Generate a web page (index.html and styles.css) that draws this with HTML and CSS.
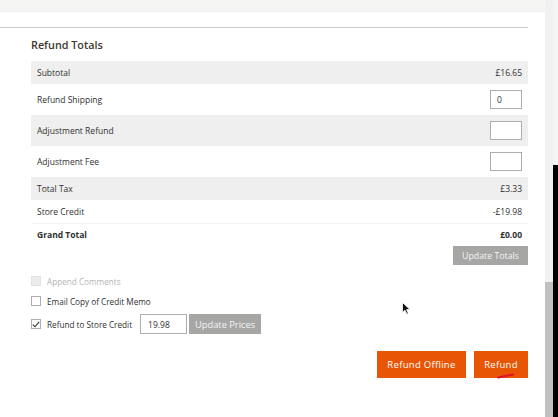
FILE: index.html
```html
<!DOCTYPE html>
<html lang="en">
<head>
    <meta charset="UTF-8">
    <title>Credit Memo - Refund Totals</title>
    <link rel="stylesheet" href="styles.css">
</head>
<body>

    <div class="viewport">
        <div class="content">
            <div class="top-band"></div>
            <div class="divider"></div>

            <!-- Totals block -->
            <section class="totals">
                <h2>Refund Totals</h2>
                <table class="totals-table">
                    <tbody>
                        <tr class="shaded short"><td>Subtotal</td><td class="amount">£16.65</td></tr>
                        <tr class="tall"><td>Refund Shipping</td><td class="amount"><input class="field" type="text" value="0"></td></tr>
                        <tr class="shaded tall"><td>Adjustment Refund</td><td class="amount"><input class="field" type="text"></td></tr>
                        <tr class="tall"><td>Adjustment Fee</td><td class="amount"><input class="field" type="text"></td></tr>
                        <tr class="shaded short"><td>Total Tax</td><td class="amount">£3.33</td></tr>
                        <tr class="short ruled"><td>Store Credit</td><td class="amount">-£19.98</td></tr>
                        <tr class="short grand"><td>Grand Total</td><td class="amount">£0.00</td></tr>
                    </tbody>
                </table>
                <div class="update-row">
                    <button class="btn-grey">Update Totals</button>
                </div>

                <!-- Options -->
                <div class="options">
                    <label class="option disabled"><span class="check"></span>Append Comments</label>
                    <label class="option"><span class="check"></span>Email Copy of Credit Memo</label>
                    <div class="option store-credit">
                        <span class="check checked">
                            <svg width="8" height="7" viewBox="0 0 8 7"><path d="M0.8 3.6 L3 5.8 L7.2 0.8" fill="none" stroke="#333" stroke-width="1.1"/></svg>
                        </span>
                        Refund to Store Credit
                        <span class="credit-group">
                            <input class="credit-field" type="text" value="19.98">
                            <button class="btn-grey btn-prices">Update Prices</button>
                        </span>
                    </div>
                </div>

                <div class="actions">
                    <button class="btn-primary btn-offline">Refund Offline</button>
                    <button class="btn-primary btn-refund">Refund<span class="scribble"></span></button>
                </div>
            </section>

            <!-- mouse pointer -->
            <svg class="cursor" width="9" height="13" viewBox="0 0 9 13">
                <path d="M0.5 0.5 L0.5 10.5 L3 8.2 L4.8 12.2 L6.3 11.5 L4.6 7.6 L8 7.6 Z" fill="#111" stroke="#fff" stroke-width="0.8"/>
            </svg>
        </div>

        <div class="scrollbar">
            <div class="track"></div>
            <div class="thumb"></div>
        </div>
        <div class="edge">
            <div class="edge-top"></div>
        </div>
    </div>

</body>
</html>
```

FILE: styles.css
```css
/* Page frame */
body {
    margin: 0;
    font-family: "Open Sans", "Liberation Sans", sans-serif;
    color: #303030;
    background-color: #fff;
}

.viewport {
    display: flex;
    height: 417px;
    overflow: hidden;
}

.content {
    position: relative;
    width: 545px;
    flex: none;
}

.top-band {
    height: 11px;
    background-color: #f5f5f4;
    border-bottom: 1px solid #ececec;
}

.divider {
    margin-top: 15px;
    margin-right: 17px;
    border-top: 1px solid #d0d0d0;
}

/* Totals */
.totals {
    padding: 0 17px 0 31px;
}

.totals h2 {
    margin: 9px 0 8px;
    font-size: 10.8px;
    font-weight: 600;
    color: #41362f;
    line-height: 16px;
}

.totals-table {
    width: 100%;
    border-collapse: collapse;
    font-size: 8.5px;
}

.totals-table td {
    padding: 0 6px;
}

.totals-table .amount {
    text-align: right;
}

.shaded { background-color: #efefef; }
.short { height: 23px; }
.tall { height: 31px; }
.ruled { border-bottom: 1px solid #f4f4f4; }
.grand td { font-weight: 700; }

.field {
    box-sizing: border-box;
    width: 32px;
    height: 19px;
    margin: 0;
    padding: 0 6px;
    border: 1px solid #adadad;
    font-family: inherit;
    font-size: 8.5px;
    color: #303030;
    vertical-align: middle;
}

.update-row {
    display: flex;
    justify-content: flex-end;
}

.btn-grey {
    height: 19px;
    padding: 0 9px;
    border: none;
    background-color: #a6a6a5;
    color: #f4f4f4;
    font-family: inherit;
    font-size: 8.8px;
}

/* Checkbox options */
.options {
    margin-top: 6px;
}

.option {
    display: flex;
    align-items: center;
    gap: 6px;
    font-size: 8.2px;
    height: 20px;
}

.option.disabled {
    color: #b5b5b5;
}

.option.store-credit {
    margin-top: 3px;
}

.check {
    box-sizing: border-box;
    width: 10px;
    height: 10px;
    border: 1px solid #adadad;
    background-color: #fff;
    display: flex;
    align-items: center;
    justify-content: center;
}

.disabled .check {
    border-color: #e3e3e3;
    background-color: #ececec;
}

.credit-group {
    display: flex;
    gap: 2px;
    margin-left: 2px;
}

.credit-field {
    box-sizing: border-box;
    width: 47px;
    height: 20px;
    margin: 0;
    padding: 0 7px;
    border: 1px solid #adadad;
    font-family: inherit;
    font-size: 8.5px;
    color: #303030;
}

.btn-prices {
    height: 20px;
    width: 72px;
    padding: 0;
    font-size: 9.3px;
}

/* Main actions */
.actions {
    display: flex;
    justify-content: flex-end;
    gap: 8px;
    margin-top: 17px;
}

.btn-primary {
    position: relative;
    height: 27px;
    padding: 0;
    border: none;
    background-color: #e85505;
    color: #fff;
    font-family: inherit;
    font-size: 9.5px;
    font-weight: 500;
    letter-spacing: 0.3px;
}

.btn-offline {
    width: 89px;
}

.btn-refund {
    width: 54px;
}

.scribble {
    position: absolute;
    left: 23px;
    top: 24px;
    width: 17px;
    height: 1.5px;
    border-radius: 1px;
    background-color: #e0102a;
    transform: rotate(-12deg);
}

.cursor {
    position: absolute;
    left: 402px;
    top: 302px;
}

/* Browser scrollbar strip */
.scrollbar {
    width: 8px;
    display: flex;
    flex-direction: column;
    background-color: #f1f1f1;
}

.track {
    height: 282px;
    background-color: #f1f1f1;
}

.thumb {
    flex: 1;
    background-color: #c1c1c1;
}

.edge {
    flex: 1;
    display: flex;
    flex-direction: column;
    background-color: #000;
}

.edge-top {
    height: 165px;
    background-color: #f4f4f4;
}
```
